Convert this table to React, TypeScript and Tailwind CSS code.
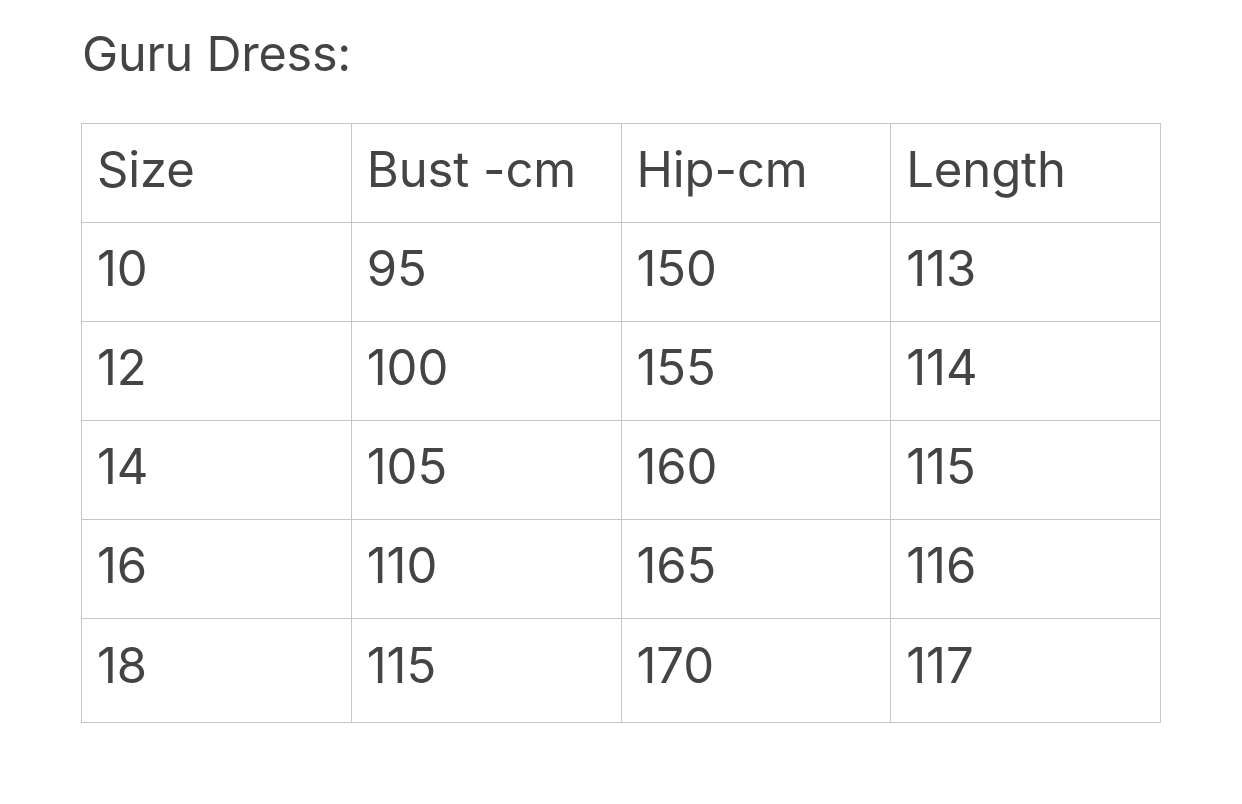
const rows = [
  ["Size", "Bust -cm", "Hip-cm", "Length"],
  ["10", "95", "150", "113"],
  ["12", "100", "155", "114"],
  ["14", "105", "160", "115"],
  ["16", "110", "165", "116"],
  ["18", "115", "170", "117"],
]

export default function App() {
  return (
    <div className="min-h-[804px] bg-white pl-[81px] pt-[22px] text-[#444444] font-['Inter',sans-serif]">
      <h1 className="pl-[1px] text-[48.5px] leading-[64px] font-normal tracking-[-0.2px]">Guru Dress:</h1>
      <table className="mt-[37px] w-[1080px] table-fixed border-collapse">
        <tbody>
          {rows.map((row, i) => (
            <tr key={i} className={i === rows.length - 1 ? "h-[104px]" : "h-[99px]"}>
              {row.map((cell, j) => (
                <td
                  key={j}
                  className={
                    "border border-[#c6c6c6] pl-[15px] text-[49px] leading-none tracking-[-0.1px] " +
                    (i === rows.length - 1 ? "align-top pt-[22px]" : "align-middle pb-[7px]")
                  }
                >
                  {cell}
                </td>
              ))}
            </tr>
          ))}
        </tbody>
      </table>
    </div>
  )
}
